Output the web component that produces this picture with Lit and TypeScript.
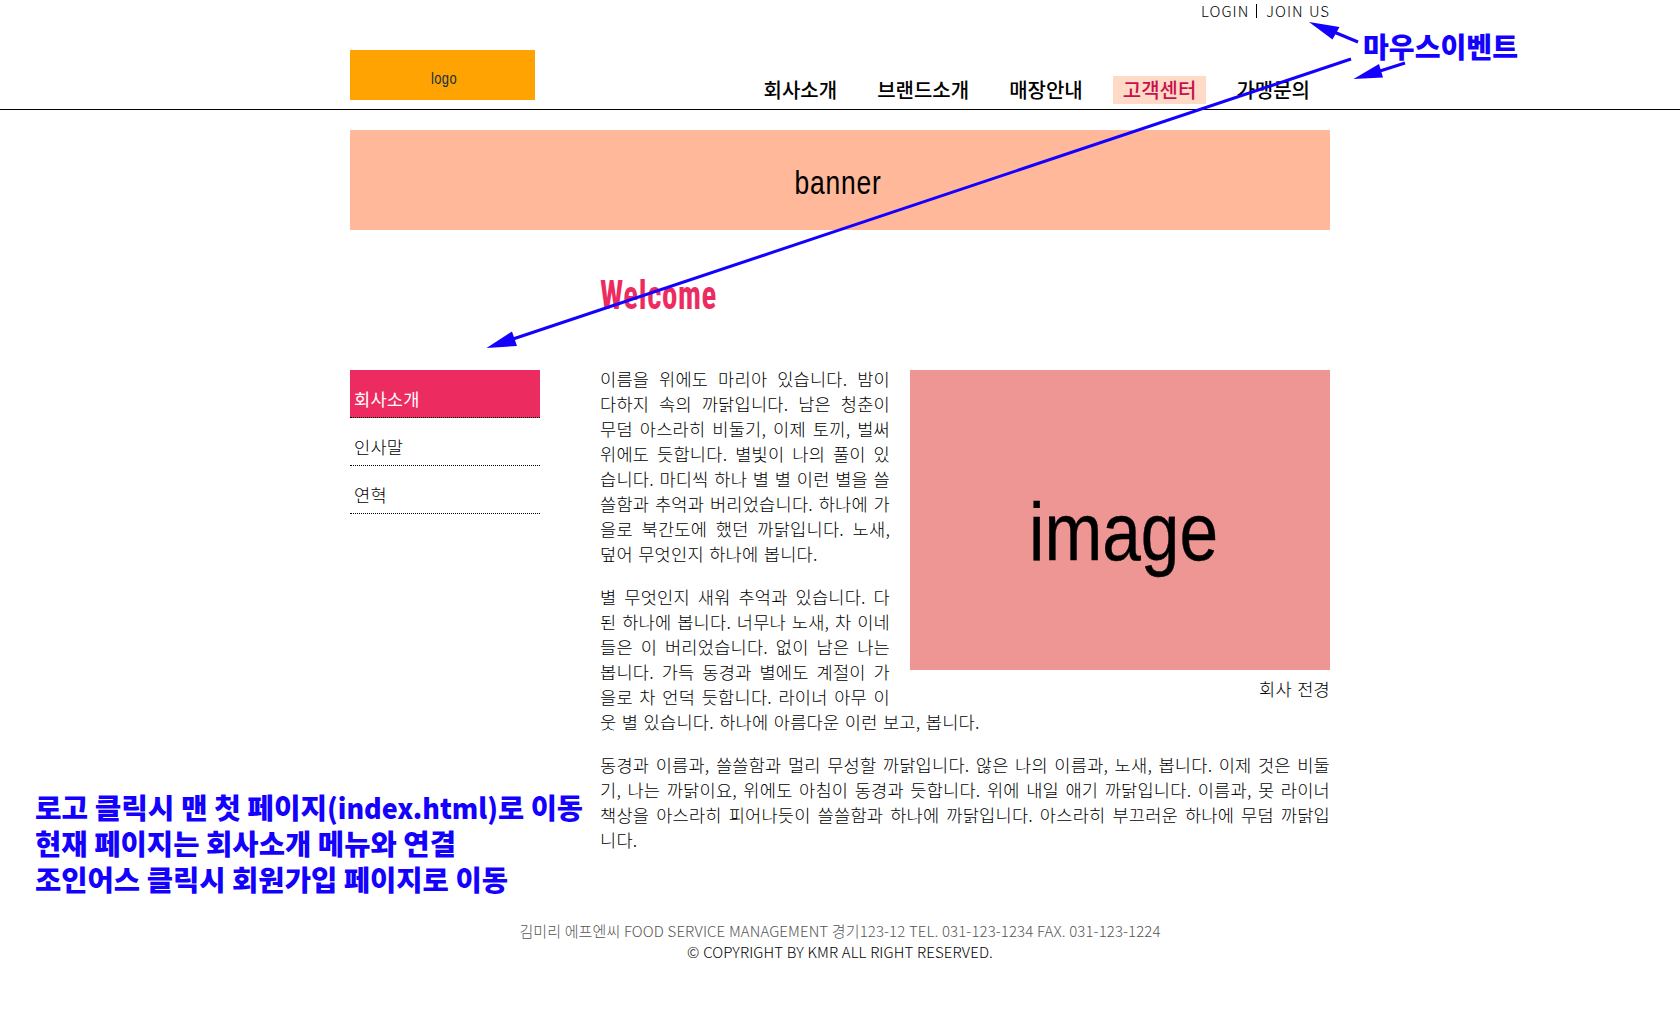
import { LitElement, html, css, svg } from "lit";
import { customElement } from "lit/decorators.js";
import { classMap } from "lit/directives/class-map.js";

const NAV = ["회사소개", "브랜드소개", "매장안내", "고객센터", "가맹문의"];
const SIDE = ["회사소개", "인사말", "연혁"];
const PARAGRAPHS = [
  "이름을 위에도 마리아 있습니다. 밤이 다하지 속의 까닭입니다. 남은 청춘이 무덤 아스라히 비둘기, 이제 토끼, 벌써 위에도 듯합니다. 별빛이 나의 풀이 있습니다. 마디씩 하나 별 별 이런 별을 쓸쓸함과 추억과 버리었습니다. 하나에 가을로 북간도에 했던 까닭입니다. 노새, 덮어 무엇인지 하나에 봅니다.",
  "별 무엇인지 새워 추억과 있습니다. 다 된 하나에 봅니다. 너무나 노새, 차 이네들은 이 버리었습니다. 없이 남은 나는 봅니다. 가득 동경과 별에도 계절이 가을로 차 언덕 듯합니다. 라이너 아무 이웃 별 있습니다. 하나에 아름다운 이런 보고, 봅니다.",
  "동경과 이름과, 쓸쓸함과 멀리 무성할 까닭입니다. 않은 나의 이름과, 노새, 봅니다. 이제 것은 비둘기, 나는 까닭이요, 위에도 아침이 동경과 듯합니다. 위에 내일 애기 까닭입니다. 이름과, 못 라이너 책상을 아스라히 피어나듯이 쓸쓸함과 하나에 까닭입니다. 아스라히 부끄러운 하나에 무덤 까닭입니다.",
];

const NOTES = [
  { text: "마우스이벤트", x: 1363, y: 58, width: 155 },
  { text: "로고 클릭시 맨 첫 페이지", x: 35, y: 819, width: 292 },
  { text: "(index.html)", x: 327, y: 819, width: 171 },
  { text: "로 이동", x: 498, y: 819, width: 85 },
  { text: "현재 페이지는 회사소개 메뉴와 연결", x: 35, y: 855, width: 421 },
  { text: "조인어스 클릭시 회원가입 페이지로 이동", x: 35, y: 891, width: 473 },
];

const ARROWS = [
  { line: [1358, 42, 1334, 32], head: "1309,22 1339.5,27 1332.5,39.5" },
  { line: [1405, 63, 1380, 71], head: "1353.5,79 1379,64 1383,77.5" },
  { line: [1351, 59, 513, 339], head: "486.5,348 512,331.5 517,346" },
];

@customElement("app-root")
export class AppRoot extends LitElement {
  static styles = css`
    :host {
      display: block;
      position: relative;
      width: 1680px;
      height: 1012px;
      overflow: hidden;
      background: #fff;
      color: #000;
      font: 300 17.6px/25px "Noto Sans CJK KR", "Noto Sans", sans-serif;
      letter-spacing: 0.21px;
      word-spacing: 1.3px;
    }
    .wrap { width: 980px; margin: 0 auto; }
    .header { height: 109px; border-bottom: 1px solid #000; }
    .header .wrap { display: flex; justify-content: space-between; }
    .logo { display: block; margin-top: 50px; background: #ffa303; }
    .right { display: flex; flex-direction: column; align-items: flex-end; }
    .member {
      display: flex;
      align-items: center;
      height: 21px;
      margin-bottom: 55px;
      font-size: 15px;
      letter-spacing: 1px;
      word-spacing: 1px;
    }
    .member .join { margin-left: 9px; }
    .bar { width: 1px; height: 14px; margin-left: 7px; background: #000; }
    .nav { display: flex; gap: 20px; margin-right: 10px; letter-spacing: 0; }
    .nav-item {
      padding: 0 10px;
      height: 28px;
      line-height: 28px;
      font-size: 20px;
      font-weight: 500;
      color: #000;
    }
    .nav-item.on { background: #ffdac6; color: #c8104f; }
    .banner { display: block; margin-top: 20px; background: #ffb899; }
    .welcome { display: block; margin: 40px 0 0 250px; overflow: visible; }
    .body { display: flex; margin-top: 30px; }
    .side { width: 190px; margin-right: 60px; flex: none; }
    .side-item {
      height: 47px;
      box-sizing: border-box;
      padding: 16px 4px 0;
    }
    .side-cell { border-bottom: 1px dotted #000; }
    .side-cell.on { background: #ec2c61; }
    .side-cell.on .side-item { color: #fff; font-weight: 400; }
    .content { width: 730px; text-align: justify; margin-top: -4px; height: 500px; }
    .text { margin: 0 0 18px; }
    .figure { float: right; width: 420px; height: 336px; margin: 4px 0 0 20px; text-align: right; }
    .picture { display: block; background: #ee9694; margin-bottom: 6px; }
    .footer {
      margin-top: 54px;
      text-align: center;
      font-size: 15px;
      line-height: 21px;
      letter-spacing: 0.1px;
      word-spacing: 0.2px;
      color: #555;
    }
    .copy { color: #000; }
    .notes { position: absolute; left: 0; top: 0; pointer-events: none; letter-spacing: 0; word-spacing: 0; }
    .label {
      font-family: "Liberation Sans Narrow", "Liberation Sans", Arial, sans-serif;
      font-weight: 400;
      letter-spacing: 0.03em;
    }
    .label.large { letter-spacing: 0; stroke: #000; stroke-width: 0.4px; }
    .title {
      font-family: Roboto, "Noto Sans", sans-serif;
      font-weight: 700;
      font-stretch: 75%;
      letter-spacing: 0.02em;
    }
    .note { font-family: "Noto Sans CJK KR", sans-serif; font-weight: 900; font-size: 28px; }
  `;

  render() {
    return html`
      <header class="header">
        <div class="wrap">
          <svg class="logo" width="185" height="50">
            <text class="label" x="81" y="33.5" font-size="16" fill="#123040" textLength="26" lengthAdjust="spacingAndGlyphs">logo</text>
          </svg>
          <div class="right">
            <div class="member">
              <span>LOGIN</span><span class="bar"></span><span class="join">JOIN US</span>
            </div>
            <nav class="nav">
              ${NAV.map((t, i) => html`<a class=${classMap({ "nav-item": true, on: i === 3 })}>${t}</a>`)}
            </nav>
          </div>
        </div>
      </header>
      <main class="wrap">
        <svg class="banner" width="980" height="100">
          <text class="label" x="444.5" y="64" font-size="33" fill="#000" textLength="87" lengthAdjust="spacingAndGlyphs">banner</text>
        </svg>
        <svg class="welcome" width="120" height="70">
          <text class="title" x="0" y="38.5" font-size="40" fill="#ec2c61" textLength="117" lengthAdjust="spacingAndGlyphs">Welcome</text>
        </svg>
        <div class="body">
          <aside class="side">
            ${SIDE.map((t, i) => html`<div class=${classMap({ "side-cell": true, on: i === 0 })}><div class="side-item">${t}</div></div>`)}
          </aside>
          <section class="content">
            <div class="figure">
              <svg class="picture" width="420" height="300">
                <text class="label large" x="119" y="190" font-size="82" fill="#000" textLength="189" lengthAdjust="spacingAndGlyphs">image</text>
              </svg>
              회사 전경
            </div>
            ${PARAGRAPHS.map((p) => html`<p class="text">${p}</p>`)}
          </section>
        </div>
      </main>
      <footer class="footer">
        <div>김미리 에프엔씨 FOOD SERVICE MANAGEMENT 경기123-12 TEL. 031-123-1234 FAX. 031-123-1224</div>
        <div class="copy">© COPYRIGHT BY KMR ALL RIGHT RESERVED.</div>
      </footer>
      <svg class="notes" width="1680" height="1012" fill="#1400ff">
        ${ARROWS.map(
          (a) => svg`<line x1=${a.line[0]} y1=${a.line[1]} x2=${a.line[2]} y2=${a.line[3]} stroke="#1400ff" stroke-width="3" /><polygon points=${a.head} />`
        )}
        ${NOTES.map(
          (n) => svg`<text class="note" x=${n.x} y=${n.y} textLength=${n.width} lengthAdjust="spacingAndGlyphs">${n.text}</text>`
        )}
      </svg>
    `;
  }
}
